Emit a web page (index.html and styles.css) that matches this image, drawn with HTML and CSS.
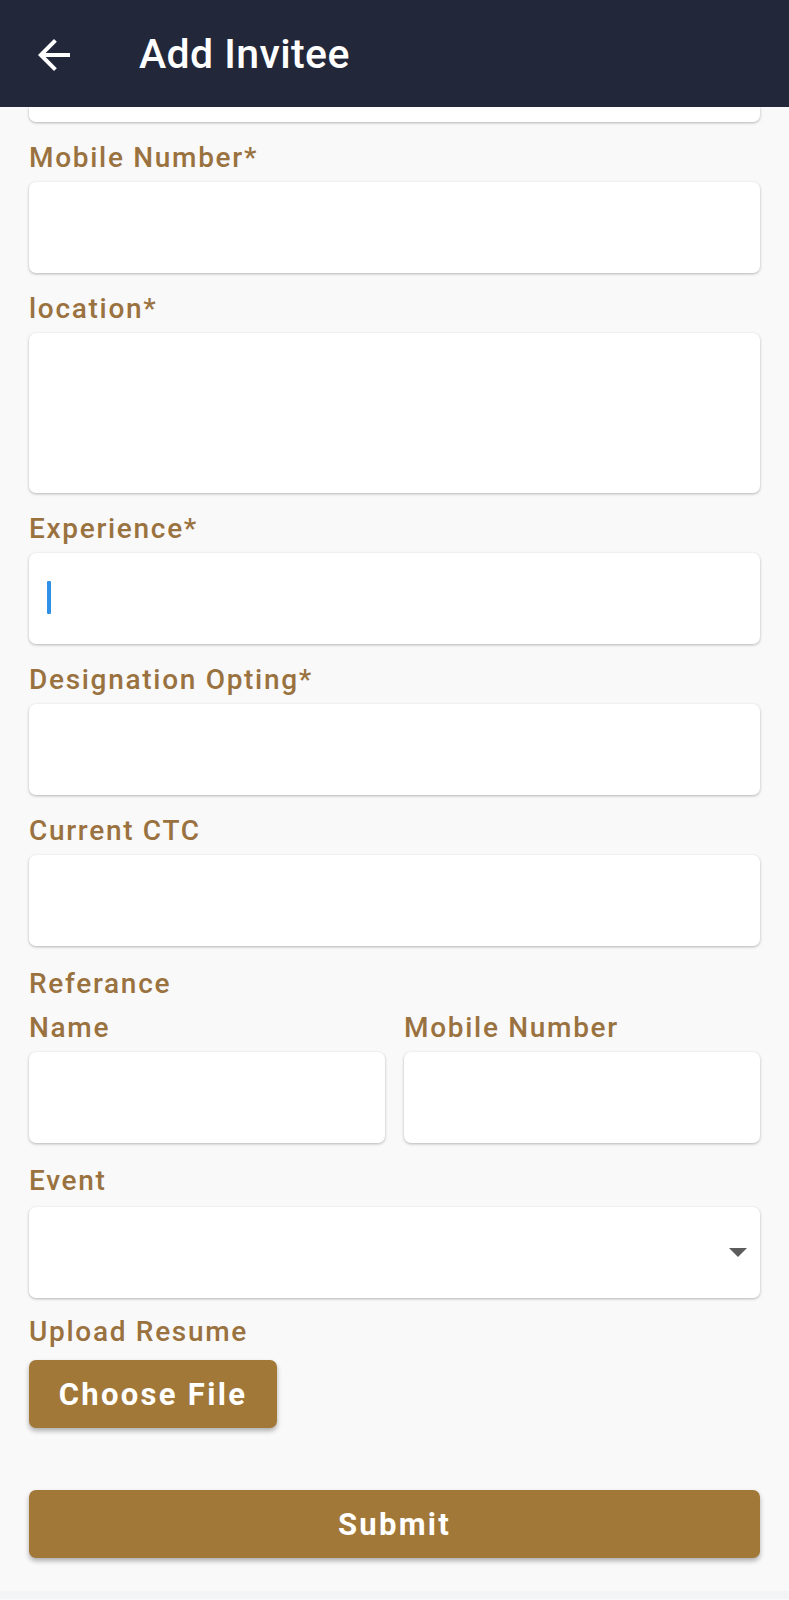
FILE: index.html
```html
<!DOCTYPE html>
<html>
<head>
<meta charset="utf-8">
<link rel="stylesheet" href="styles.css">
</head>
<body>
<header class="appbar">
  <svg class="back" viewBox="0 0 24 24" width="48" height="48"><path fill="#ffffff" d="M20 11H7.83l5.59-5.59L12 4l-8 8 8 8 1.41-1.41L7.83 13H20v-2z"/></svg>
  <h1 class="title">Add Invitee</h1>
</header>
<main class="form">
  <div class="field partial"></div>

  <div class="label">Mobile Number*</div>
  <div class="field"></div>

  <div class="label">location*</div>
  <div class="field tall"></div>

  <div class="label">Experience*</div>
  <div class="field"><span class="cursor"></span></div>

  <div class="label">Designation Opting*</div>
  <div class="field"></div>

  <div class="label">Current CTC</div>
  <div class="field"></div>

  <div class="label section">Referance</div>
  <div class="row">
    <div class="col">
      <div class="label sub">Name</div>
      <div class="field"></div>
    </div>
    <div class="col">
      <div class="label sub">Mobile Number</div>
      <div class="field"></div>
    </div>
  </div>

  <div class="label event">Event</div>
  <div class="field select"><span class="caret"></span></div>

  <div class="label upload">Upload Resume</div>
  <button class="btn choose">Choose File</button>

  <button class="btn submit">Submit</button>
</main>
<div class="navbar"></div>
</body>
</html>
```

FILE: styles.css
```css
html, body {
  margin: 0;
  padding: 0;
  background: #f9f9f9;
  font-family: Roboto, "Noto Sans", sans-serif;
}
.appbar {
  position: relative;
  z-index: 2;
  height: 107px;
  background: #222839;
  display: flex;
  align-items: center;
  box-sizing: border-box;
  padding-left: 30px;
}
.back {
  display: block;
  margin-top: 3px;
}
.title {
  margin: 0 0 0 61px;
  color: #ffffff;
  font-size: 41px;
  font-weight: 500;
  letter-spacing: 0.4px;
}
.form {
  padding: 0 29px;
  display: flex;
  flex-direction: column;
}
.field {
  position: relative;
  height: 91px;
  background: #ffffff;
  border-radius: 7px;
  box-shadow: 0 1px 3px rgba(0, 0, 0, 0.28);
}
.field.partial {
  height: 15px;
  border-radius: 0 0 7px 7px;
}
.field.tall {
  height: 160px;
}
.label {
  padding: 21px 0 9px;
  line-height: 30px;
  font-size: 28px;
  font-weight: 500;
  color: #9a723f;
  letter-spacing: 1.7px;
}
.label.section {
  padding: 23px 0 0;
}
.label.sub {
  padding: 14px 0 9px;
}
.label.event {
  padding: 23px 0 11px;
}
.label.upload {
  padding: 19px 0 13px;
}
.row {
  display: flex;
  gap: 19px;
}
.col {
  flex: 1;
  display: flex;
  flex-direction: column;
}
.cursor {
  position: absolute;
  left: 18px;
  top: 28px;
  width: 4px;
  height: 33px;
  border-radius: 1px;
  background: #3090e6;
}
.caret {
  position: absolute;
  right: 13px;
  top: 41px;
  width: 0;
  height: 0;
  border-left: 9.5px solid transparent;
  border-right: 9.5px solid transparent;
  border-top: 9px solid #5c5c5c;
}
.btn {
  border: none;
  background: #a27839;
  color: #ffffff;
  font-family: Roboto, "Noto Sans", sans-serif;
  font-weight: 700;
  font-size: 31px;
  letter-spacing: 2.3px;
  border-radius: 7px;
  box-shadow: 0 3px 5px rgba(0, 0, 0, 0.3);
  padding: 0;
}
.choose {
  align-self: flex-start;
  width: 248px;
  height: 68px;
}
.submit {
  margin-top: 62px;
  height: 68px;
  width: 100%;
}
.navbar {
  margin-top: 33px;
  height: 8px;
  background: #f3f4f6;
}
```
